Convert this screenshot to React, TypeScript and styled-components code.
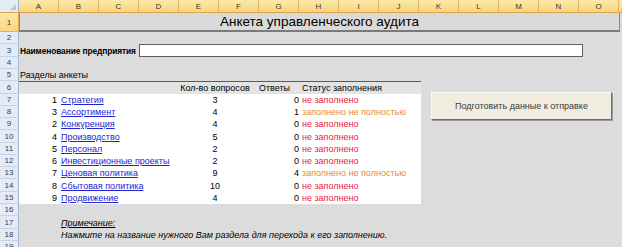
import React from 'react';
import styled, { createGlobalStyle } from 'styled-components';

const GlobalStyle = createGlobalStyle`
  html, body { margin: 0; padding: 0; background: #dcdcdc; }
  body { font-family: "Liberation Sans", Arial, sans-serif; color: #000; }
`;

const COLS = ['A', 'B', 'C', 'D', 'E', 'F', 'G', 'H', 'I', 'J', 'K', 'L', 'M', 'N', 'O'];
// row heights in px, rows 1..19
const ROW_H = [19, 12, 13, 12, 12, 13, 12, 12, 12, 13, 12, 12, 12, 13, 12, 12, 13, 12, 12];

type Section = { no: number; name: string; count: number; answers: number };

const SECTIONS: Section[] = [
  { no: 1, name: 'Стратегия', count: 3, answers: 0 },
  { no: 3, name: 'Ассортимент', count: 4, answers: 1 },
  { no: 2, name: 'Конкуренция', count: 4, answers: 0 },
  { no: 4, name: 'Производство', count: 5, answers: 0 },
  { no: 5, name: 'Персонал', count: 2, answers: 0 },
  { no: 6, name: 'Инвестиционные проекты', count: 2, answers: 0 },
  { no: 7, name: 'Ценовая политика', count: 9, answers: 4 },
  { no: 8, name: 'Сбытовая политика', count: 10, answers: 0 },
  { no: 9, name: 'Продвижение', count: 4, answers: 0 },
];

const Page = styled.div`
  position: relative;
  width: 622px;
  height: 247px;
  overflow: hidden;
  background: #dcdcdc;
`;

const HeaderBar = styled.div`
  display: flex;
  height: 13px;
  border-bottom: 1px solid #e2a14a;
  box-sizing: border-box;
`;

const Corner = styled.div`
  position: relative;
  width: 19px;
  flex: none;
  background: #e6ecf4;
  border-right: 1px solid #9eb6ce;
  box-sizing: border-box;
  &::after {
    content: '';
    position: absolute;
    right: 2px;
    bottom: 2px;
    border-left: 6px solid transparent;
    border-bottom: 6px solid #b7c6d8;
  }
`;

const ColHead = styled.div`
  width: 40px;
  flex: none;
  display: flex;
  align-items: center;
  justify-content: center;
  background: linear-gradient(#fde9a9, #f9d57c);
  border-right: 1px solid #e3b35c;
  box-sizing: border-box;
  font-size: 8px;
  color: #3e3528;
`;

const ColFill = styled.div`
  flex: 1;
  background: linear-gradient(#fde9a9, #f9d57c);
`;

const Row = styled.div<{ $h: number }>`
  display: flex;
  height: ${(p) => p.$h}px;
`;

const RowNum = styled.div<{ $active?: boolean }>`
  width: 19px;
  flex: none;
  display: flex;
  align-items: center;
  justify-content: center;
  box-sizing: border-box;
  background: ${(p) => (p.$active ? 'linear-gradient(#fde9a9, #f9d57c)' : '#e4ebf6')};
  border-right: 1px solid ${(p) => (p.$active ? '#e2a14a' : '#9eb6ce')};
  border-bottom: 1px solid ${(p) => (p.$active ? '#e3b35c' : '#c5d3e3')};
  font-size: 8px;
  color: #2b3f5c;
`;

const Cells = styled.div`
  flex: 1;
  display: flex;
  align-items: center;
  min-width: 0;
`;

const Title = styled.div`
  width: 601px;
  height: 100%;
  box-sizing: border-box;
  display: flex;
  align-items: center;
  justify-content: center;
  border-left: 1px solid #8a8a8a;
  border-right: 1px solid #8a8a8a;
  border-bottom: 2px solid #7a7a7a;
  background: #dadada;
  font-size: 13.5px;
`;

const FieldLabel = styled.div`
  width: 120px;
  flex: none;
  padding-left: 1px;
  box-sizing: border-box;
  font-size: 8.4px;
  font-weight: bold;
  letter-spacing: -0.1px;
  white-space: nowrap;
`;

const NameInput = styled.div`
  width: 444px;
  height: 13px;
  flex: none;
  box-sizing: border-box;
  background: #fff;
  border: 1px solid #5e5e5e;
`;

const Plain = styled.div<{ $indent?: number; $italic?: boolean; $underline?: boolean }>`
  padding-left: ${(p) => p.$indent ?? 1}px;
  font-size: 9px;
  white-space: nowrap;
  font-style: ${(p) => (p.$italic ? 'italic' : 'normal')};
  text-decoration: ${(p) => (p.$underline ? 'underline' : 'none')};
`;

const TableGrid = styled.div<{ $head?: boolean }>`
  width: 402px;
  height: 100%;
  box-sizing: border-box;
  display: grid;
  grid-template-columns: 40px 121px 70px 50px 1fr;
  align-items: center;
  font-size: 9px;
  white-space: nowrap;
  background: ${(p) => (p.$head ? '#e3e3e3' : '#fff')};
  border-top: ${(p) => (p.$head ? '1px solid #5a5a5a' : 'none')};
`;

const Num = styled.div`
  text-align: right;
  padding-right: 2px;
`;

const SectionLink = styled.a`
  padding-left: 2px;
  color: #2323d6;
  text-decoration: underline;
  cursor: pointer;
`;

const Center = styled.div`
  text-align: center;
`;

const Answers = styled.div<{ $head?: boolean }>`
  text-align: ${(p) => (p.$head ? 'center' : 'right')};
  padding-right: 1px;
`;

const Status = styled.div<{ $partial?: boolean; $head?: boolean }>`
  padding-left: 2px;
  color: ${(p) => (p.$head ? '#000' : p.$partial ? '#e88a2a' : '#f02040')};
`;

const SendButton = styled.button`
  position: absolute;
  left: 431px;
  top: 92px;
  width: 181px;
  height: 28px;
  padding: 0;
  background: #f0ede0;
  border: 1px solid;
  border-color: #fbfaf5 #6f6f6f #6f6f6f #fbfaf5;
  box-shadow: 1px 1px 0 #9a9a9a;
  font-family: "Liberation Sans", Arial, sans-serif;
  font-size: 9px;
  color: #3a3a3a;
`;

const Sheet = () => {
  const rows: React.ReactNode[] = [];
  const content = (r: number): React.ReactNode => {
    if (r === 1) return <Title>Анкета управленческого аудита</Title>;
    if (r === 3)
      return (
        <>
          <FieldLabel>Наименование предприятия</FieldLabel>
          <NameInput />
        </>
      );
    if (r === 5) return <Plain>Разделы анкеты</Plain>;
    if (r === 6)
      return (
        <TableGrid $head>
          <div />
          <div />
          <Center>Кол-во вопросов</Center>
          <Answers $head>Ответы</Answers>
          <Status $head>Статус заполнения</Status>
        </TableGrid>
      );
    if (r >= 7 && r <= 15) {
      const s = SECTIONS[r - 7];
      const partial = s.answers > 0;
      return (
        <TableGrid>
          <Num>{s.no}</Num>
          <div>
            <SectionLink>{s.name}</SectionLink>
          </div>
          <Center>{s.count}</Center>
          <Answers>{s.answers}</Answers>
          <Status $partial={partial}>{partial ? 'заполнено не полностью' : 'не заполнено'}</Status>
        </TableGrid>
      );
    }
    if (r === 17)
      return (
        <Plain $indent={42} $italic $underline>
          Примечание:
        </Plain>
      );
    if (r === 18)
      return (
        <Plain $indent={42} $italic>
          Нажмите на название нужного Вам раздела для перехода к его заполнению.
        </Plain>
      );
    return null;
  };

  ROW_H.forEach((h, i) => {
    const r = i + 1;
    rows.push(
      <Row key={r} $h={h}>
        <RowNum $active={r === 1}>{r}</RowNum>
        <Cells>{content(r)}</Cells>
      </Row>
    );
  });
  return <>{rows}</>;
};

export default function App() {
  return (
    <>
      <GlobalStyle />
      <Page>
        <HeaderBar>
          <Corner />
          {COLS.map((c) => (
            <ColHead key={c}>{c}</ColHead>
          ))}
          <ColFill />
        </HeaderBar>
        <Sheet />
        <SendButton>Подготовить данные к отправке</SendButton>
      </Page>
    </>
  );
}
